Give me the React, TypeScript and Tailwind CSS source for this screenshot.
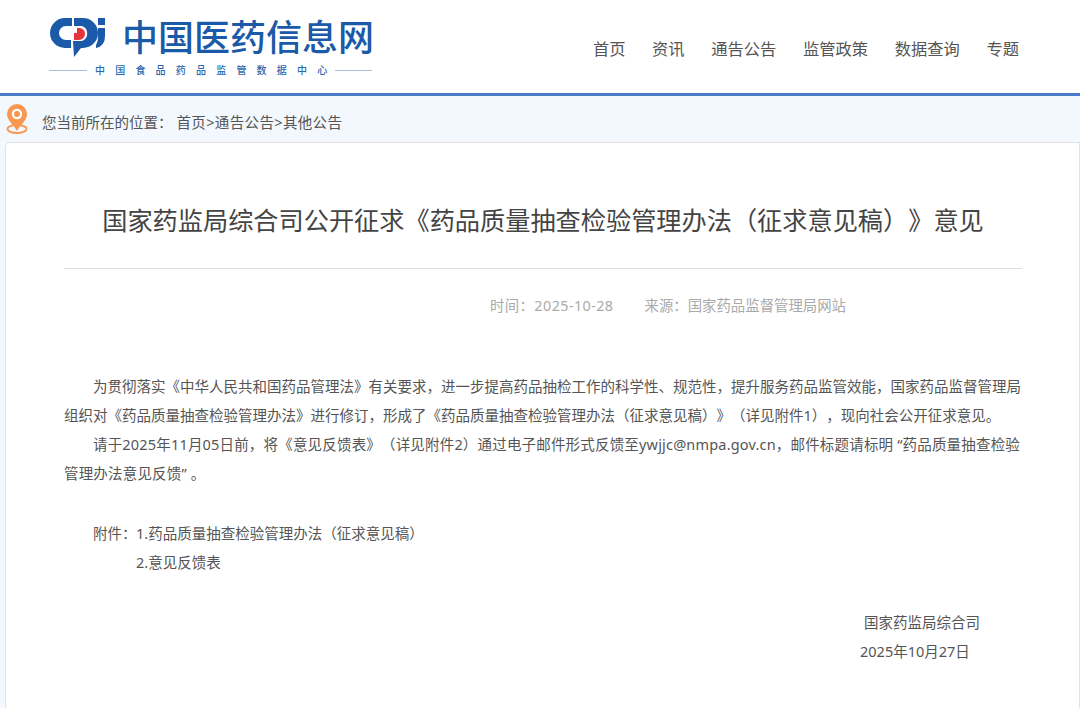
const navItems = ['首页', '资讯', '通告公告', '监管政策', '数据查询', '专题'];

function LogoMark() {
  return (
    <svg viewBox="49 17 57 41" className="h-[41px] w-[57px] shrink-0">
      <path d="M72 18H65A15 15 0 0 0 65 48H71L71 40H66A7 7 0 0 1 66 26H72Z" fill="#1b5aa8" />
      <path d="M74 18H83A15 15 0 0 1 83 48H81L74 57L73 41H82A8 8 0 0 0 82 26H74Z" fill="#1b5aa8" />
      <path d="M77 28H80A6 6 0 0 1 85 34A6 6 0 0 1 79 40H74V33H77Z" fill="#e8343c" />
      <path d="M98 18H105V25H98Z" fill="#1b5aa8" />
      <path d="M98 28H105V36Q105 46 96 48L96 45Q98 42 98 36Z" fill="#1b5aa8" />
    </svg>
  );
}

function PinIcon() {
  return (
    <svg viewBox="0 0 22 32" className="h-8 w-[22px] shrink-0">
      <ellipse cx="11" cy="26" rx="9.5" ry="4" fill="none" stroke="#f9964f" strokeWidth="1.8" />
      <path d="M11 1A10 10 0 0 0 1 11C1 17 7 21 11 28C15 21 21 17 21 11A10 10 0 0 0 11 1Z" fill="#f9964f" />
      <circle cx="11" cy="11" r="5.2" fill="#fff" />
      <circle cx="11" cy="11" r="3" fill="#f9964f" />
    </svg>
  );
}

export default function App() {
  return (
    <div className="h-[708px] overflow-hidden bg-[#f2f8fe] text-[14.5px] text-[#555] [text-spacing-trim:space-all] font-['Noto_Sans','Noto_Sans_CJK_SC',sans-serif]">
      <header className="flex h-[96px] items-start justify-between border-b-[3px] border-[#4a7bcb] bg-white pl-[49px] pr-[61px]">
        <div className="pt-[17px]">
          <div className="flex items-start gap-[16px]">
            <LogoMark />
            <span className="text-[36px] leading-[41px] font-medium whitespace-nowrap text-[#1b5aa8]">中国医药信息网</span>
          </div>
          <div className="mt-[5px] flex items-center">
            <span className="h-px w-[38px] bg-[#a9bfdc]" />
            <span className="w-[248px] pl-[8px] text-[10px] leading-[14px] font-medium tracking-[10.2px] whitespace-nowrap text-[#2b67ad]">中国食品药品监管数据中心</span>
            <span className="h-px w-[37px] bg-[#a9bfdc]" />
          </div>
        </div>
        <nav className="flex gap-[26.6px] pt-[37px] text-[16.3px] leading-[24px] text-[#555]">
          {navItems.map((item) => (
            <a key={item} className="whitespace-nowrap">{item}</a>
          ))}
        </nav>
      </header>

      <div className="flex h-[46px] items-center pl-[6px]">
        <PinIcon />
        <span className="mt-[8px] ml-[14px] whitespace-pre">您当前所在的位置：</span>
        <span className="mt-[8px] ml-[4px] whitespace-pre tracking-[0.35px]">首页&gt;通告公告&gt;其他公告</span>
      </div>

      <main className="ml-[5px] h-[600px] rounded-tl-[5px] border border-[#e2e2e2] bg-white pl-[58px] pr-[57px]">
        <h1 className="pt-[61px] text-center text-[25.2px] leading-[32px] font-normal whitespace-nowrap text-[#444]">
          国家药监局综合司公开征求《药品质量抽查检验管理办法（征求意见稿）》意见
        </h1>
        <div className="mt-[32px] border-t border-[#ddd]" />
        <div className="mt-[26px] flex gap-[31px] pl-[426px] text-[14.4px] leading-[22px] text-[#aaa]">
          <span className="tracking-[0.4px]">时间：2025-10-28</span>
          <span>来源：国家药品监督管理局网站</span>
        </div>
        <div className="mt-[55px] leading-[29px] text-[#555]">
          <p className="indent-[29px]">
            为贯彻落实《中华人民共和国药品管理法》有关要求，进一步提高药品抽检工作的科学性、规范性，提升服务药品监管效能，国家药品监督管理局组织对《药品质量抽查检验管理办法》进行修订，形成了《药品质量抽查检验管理办法（征求意见稿）》（详见附件1），现向社会公开征求意见。
          </p>
          <p className="indent-[29px] tracking-[0.18px]">
            请于2025年11月05日前，将《意见反馈表》（详见附件2）通过电子邮件形式反馈至ywjjc@nmpa.gov.cn，邮件标题请标明 “药品质量抽查检验管理办法意见反馈” 。
          </p>
        </div>
        <div className="mt-[31px] flex pl-[29px] leading-[29px]">
          <span className="w-[43px] shrink-0 whitespace-nowrap">附件：</span>
          <div>
            <p>1.药品质量抽查检验管理办法（征求意见稿）</p>
            <p>2.意见反馈表</p>
          </div>
        </div>
        <div className="mt-[31px] flex flex-col leading-[29px]">
          <p className="pl-[800px] whitespace-nowrap">国家药监局综合司</p>
          <p className="pl-[796px] whitespace-nowrap">2025年10月27日</p>
        </div>
      </main>
    </div>
  );
}
